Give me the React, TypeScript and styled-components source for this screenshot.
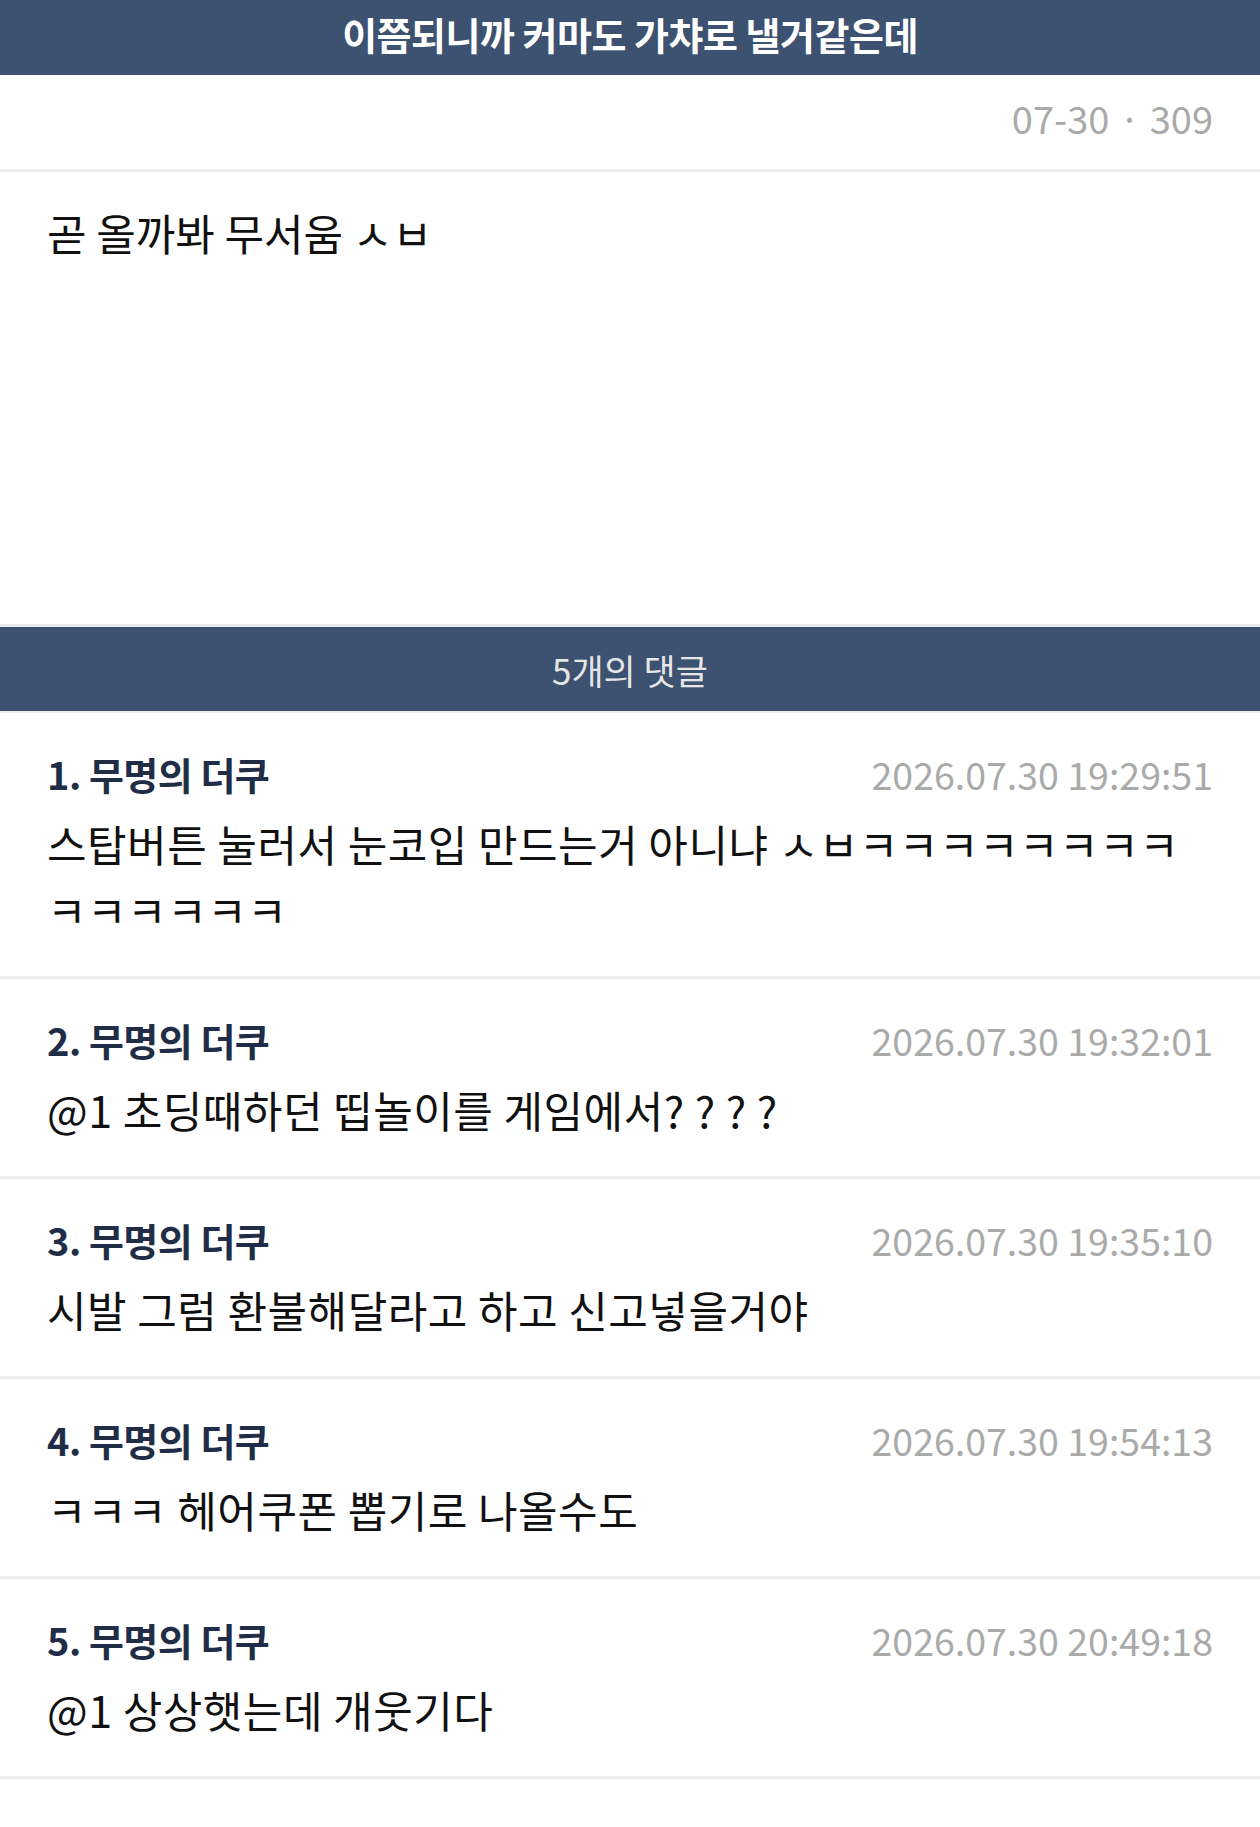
import React from 'react'
import styled, { createGlobalStyle } from 'styled-components'

const GlobalStyle = createGlobalStyle`
  body {
    margin: 0;
    background: #ffffff;
    font-family: 'Noto Sans CJK KR', 'Noto Sans', sans-serif;
  }
`

interface IComment {
  no: number
  name: string
  date: string
  text: string
}

const comments: IComment[] = [
  {
    no: 1,
    name: '무명의 더쿠',
    date: '2026.07.30 19:29:51',
    text: '스탑버튼 눌러서 눈코입 만드는거 아니냐 ㅅㅂㅋㅋㅋㅋㅋㅋㅋㅋㅋㅋㅋㅋㅋㅋ',
  },
  {
    no: 2,
    name: '무명의 더쿠',
    date: '2026.07.30 19:32:01',
    text: '@1 초딩때하던 띱놀이를 게임에서? ? ? ?',
  },
  {
    no: 3,
    name: '무명의 더쿠',
    date: '2026.07.30 19:35:10',
    text: '시발 그럼 환불해달라고 하고 신고넣을거야',
  },
  {
    no: 4,
    name: '무명의 더쿠',
    date: '2026.07.30 19:54:13',
    text: 'ㅋㅋㅋ 헤어쿠폰 뽑기로 나올수도',
  },
  {
    no: 5,
    name: '무명의 더쿠',
    date: '2026.07.30 20:49:18',
    text: '@1 상상햇는데 개웃기다',
  },
]

const App: React.FC = () => {
  return (
    <Page>
      <GlobalStyle />
      <TitleBar>이쯤되니까 커마도 가챠로 낼거같은데</TitleBar>
      <MetaRow>07-30 · 309</MetaRow>
      <Content>곧 올까봐 무서움 ㅅㅂ</Content>
      <CommentsHeader>5개의 댓글</CommentsHeader>
      <CommentList>
        {comments.map((c) => (
          <Comment key={c.no} comment={c} />
        ))}
      </CommentList>
    </Page>
  )
}

export default App

const Comment: React.FC<{ comment: IComment }> = ({ comment }) => {
  return (
    <CommentItem>
      <CommentTop>
        <Author>
          {comment.no}. {comment.name}
        </Author>
        <Stamp>{comment.date}</Stamp>
      </CommentTop>
      <CommentText>{comment.text}</CommentText>
    </CommentItem>
  )
}

const Page = styled.div`
  width: 1260px;
  min-height: 1827px;
  background: #ffffff;
  color: #111111;
`

const TitleBar = styled.header`
  height: 75px;
  box-sizing: border-box;
  padding-bottom: 8px;
  display: flex;
  align-items: center;
  justify-content: center;
  background-color: #3d5170;
  color: #ffffff;
  font-size: 38px;
  font-weight: 700;
  letter-spacing: -0.5px;
`

const MetaRow = styled.div`
  height: 97px;
  box-sizing: border-box;
  padding: 0 47px 10px;
  display: flex;
  align-items: center;
  justify-content: flex-end;
  color: #aaaaaa;
  font-size: 38px;
  word-spacing: 1px;
  border-bottom: 3px solid #eeeeee;
`

const Content = styled.div`
  height: 455px;
  box-sizing: border-box;
  padding: 27px 47px;
  font-size: 43px;
  line-height: 66px;
  border-bottom: 3px solid #e9ecef;
`

const CommentsHeader = styled.div`
  height: 84px;
  display: flex;
  align-items: center;
  justify-content: center;
  background-color: #3d5170;
  color: #e6e6e6;
  font-size: 35px;
  border-bottom: 2px solid #e9ecef;
`

const CommentList = styled.div`
  display: flex;
  flex-direction: column;
`

const CommentItem = styled.div`
  padding: 35px 47px 34px;
  border-bottom: 3px solid #eeeeee;
  display: flex;
  flex-direction: column;
  gap: 12px;
`

const CommentTop = styled.div`
  height: 50px;
  display: flex;
  align-items: center;
  justify-content: space-between;
`

const Author = styled.span`
  color: #1f2d47;
  font-size: 38px;
  font-weight: 700;
  letter-spacing: -0.5px;
`

const Stamp = styled.span`
  color: #aaaaaa;
  font-size: 37.5px;
`

const CommentText = styled.div`
  font-size: 43px;
  line-height: 66px;
  letter-spacing: 0.5px;
  color: #111111;
`
